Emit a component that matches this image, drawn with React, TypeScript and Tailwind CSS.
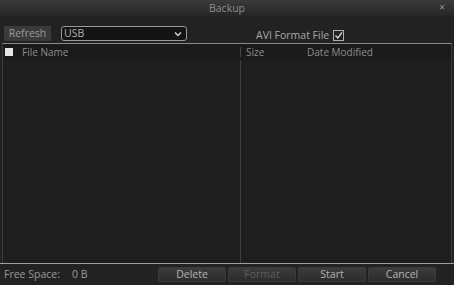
import React, { useState } from "react";

const FooterButton: React.FC<{ label: string; disabled?: boolean }> = ({ label, disabled }) => (
    <button
        className={
            "h-[15px] w-[68px] rounded-[2px] border border-[#3a3a3a] bg-gradient-to-b from-[#3c3c3c] to-[#2c2c2c] text-[10.5px] leading-[13px] " +
            (disabled ? "text-[#5c5c5c]" : "text-[#b4b4b4]")
        }
    >
        {label}
    </button>
);

const App: React.FC = () => {
    const [avi, setAvi] = useState(true);

    return (
        <div className="h-[288px] w-[456px] bg-white font-['Open_Sans',sans-serif]">
            <div className="flex h-[285px] w-[454px] flex-col bg-[#222222]">
                {/* title bar */}
                <div className="relative flex h-[16px] items-center justify-center bg-gradient-to-b from-[#3a3a3a] to-[#262626]">
                    <span className="text-[10.5px] leading-none text-[#8c8c8c]">Backup</span>
                    <span className="absolute right-[9px] top-[2px] text-[10px] leading-none text-[#9a9a9a]">×</span>
                </div>

                {/* toolbar */}
                <div className="flex h-[27px] items-end pb-[2px] pl-[4px]">
                    <button className="h-[15px] w-[47px] bg-[#3a3a3a] text-[10.5px] leading-[13px] text-[#9a9a9a]">
                        Refresh
                    </button>
                    <div className="ml-[10px] flex h-[15px] w-[126px] items-center justify-between rounded-[3px] border border-[#9a9a9a] bg-[#141414] pl-[2px] pr-[4px]">
                        <span className="text-[10.5px] leading-none text-[#b0b0b0]">USB</span>
                        <svg width="8" height="6" viewBox="0 0 8 6">
                            <path d="M1 1.5 L4 4.5 L7 1.5" stroke="#d0d0d0" strokeWidth="1.5" fill="none" />
                        </svg>
                    </div>
                    <div className="ml-[69px] flex items-center gap-[4px]">
                        <span className="text-[10.5px] leading-none text-[#a8a8a8]">AVI Format File</span>
                        <button
                            onClick={() => setAvi(!avi)}
                            className="flex h-[11px] w-[11px] items-center justify-center border border-[#b0b0b0]"
                        >
                            {avi && (
                                <svg width="9" height="9" viewBox="0 0 9 9">
                                    <path d="M1.5 4.5 L3.8 7 L8 1.5" stroke="#d8d8d8" strokeWidth="1.3" fill="none" />
                                </svg>
                            )}
                        </button>
                    </div>
                </div>

                {/* table */}
                <div className="mx-[2px] flex flex-1 flex-col border-x border-t border-[#8a8a8a] border-x-[#3c3c3c]">
                    <div className="flex h-[16px] items-center bg-[#1a1a1a] text-[10px] leading-none text-[#8e8e8e]">
                        <div className="flex w-[238px] items-center border-r border-[#444444]">
                            <span className="ml-[2px] h-[8px] w-[8px] bg-[#e6e6e6]" />
                            <span className="ml-[9px]">File Name</span>
                        </div>
                        <span className="ml-[5px] w-[61px]">Size</span>
                        <span>Date Modified</span>
                    </div>
                    <div className="flex flex-1 bg-[#1e1e1e]">
                        <div className="w-[238px] border-r border-[#3e3e3e]" />
                        <div className="flex-1" />
                    </div>
                </div>

                {/* footer */}
                <div className="flex h-[22px] items-center border-t border-[#a0a0a0] pl-[4px]">
                    <span className="w-[148px] text-[10.5px] leading-none text-[#9a9a9a]">
                        Free Space:<span className="ml-[12px]">0 B</span>
                    </span>
                    <div className="ml-[6px] flex gap-[2px]">
                        <FooterButton label="Delete" />
                        <FooterButton label="Format" disabled />
                        <FooterButton label="Start" />
                        <FooterButton label="Cancel" />
                    </div>
                </div>
            </div>
        </div>
    );
};

export default App;
